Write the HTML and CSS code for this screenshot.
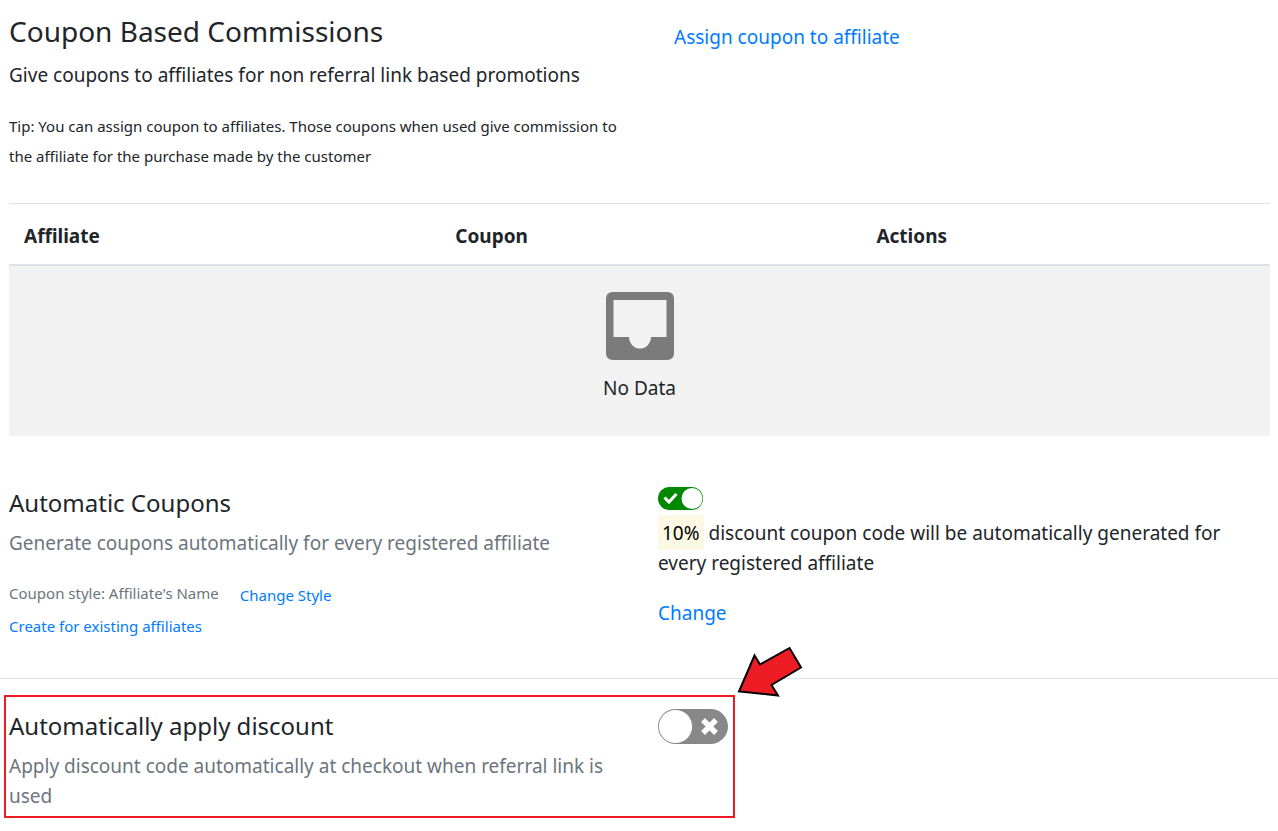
FILE: index.html
```html
<!DOCTYPE html>
<html lang="en">
<head>
<meta charset="utf-8">
<meta name="viewport" content="width=device-width, initial-scale=1">
<title>Coupon Based Commissions</title>
<link rel="stylesheet" href="styles.css">
</head>
<body>
<main>
  <header class="row intro">
    <div>
      <h1 class="title">Coupon Based Commissions</h1>
      <p class="text">Give coupons to affiliates for non referral link based promotions</p>
      <p class="tip">Tip: You can assign coupon to affiliates. Those coupons when used give commission to the affiliate for the purchase made by the customer</p>
    </div>
    <div class="assign"><a class="link" href="#assign">Assign coupon to affiliate</a></div>
  </header>

  <div class="table-wrap">
    <table class="coupons">
      <thead>
        <tr><th class="col-affiliate" scope="col">Affiliate</th><th class="col-coupon" scope="col">Coupon</th><th scope="col">Actions</th></tr>
      </thead>
      <tbody>
        <tr>
          <td class="empty" colspan="3">
            <svg class="inbox" viewBox="0 0 68 68" aria-hidden="true">
              <path fill="#7b7b7b" fill-rule="evenodd" d="M7 0H61Q68 0 68 7V61Q68 68 61 68H7Q0 68 0 61V7Q0 0 7 0ZM7.500 8V45H23A11 11.500 0 0 0 45 45H60.500V8Z"/>
            </svg>
            <div>No Data</div>
          </td>
        </tr>
      </tbody>
    </table>
  </div>

  <section class="row automatic">
    <div>
      <h2 class="subtitle" id="automatic-title">Automatic Coupons</h2>
      <p class="text muted">Generate coupons automatically for every registered affiliate</p>
      <div class="style-line">
        <span class="muted">Coupon style: Affiliate's Name</span>
        <a class="link style-link" href="#style">Change Style</a>
      </div>
      <a class="link existing" href="#existing">Create for existing affiliates</a>
    </div>
    <div class="generated">
      <label class="toggle toggle-small">
        <input class="toggle-input" type="checkbox" aria-labelledby="automatic-title" checked>
        <svg class="toggle-art" viewBox="0 0 45 23" aria-hidden="true">
          <rect width="45" height="23" rx="11.5" fill="#080"/>
          <circle cx="34" cy="11.5" r="10.5" fill="#fff"/>
          <path d="M6.5 10.5L11 15L18.5 7" fill="none" stroke="#fff" stroke-width="3"/>
        </svg>
      </label>
      <p class="text"><mark class="percent">10%</mark> discount coupon code will be automatically generated for every registered affiliate</p>
      <a class="link change" href="#change">Change</a>
    </div>
  </section>

  <section class="row apply">
    <div>
      <h2 class="subtitle" id="apply-title">Automatically apply discount</h2>
      <p class="text muted">Apply discount code automatically at checkout when referral link is used</p>
    </div>
    <div>
      <label class="toggle">
        <input class="toggle-input" type="checkbox" aria-labelledby="apply-title">
        <svg class="toggle-art" viewBox="0 0 70 35" aria-hidden="true">
          <rect width="70" height="35" rx="17.5" fill="#888"/>
          <circle cx="17.5" cy="17.5" r="16.6" fill="#fff"/>
          <path d="M45 11L58 24M58 11L45 24" fill="none" stroke="#fff" stroke-width="5.4"/>
        </svg>
        <svg class="arrow" viewBox="0 0 66 52" aria-hidden="true">
          <path d="M2 45.500L17.500 9.500L23 18.500L52.500 2L64 21.500L34.500 39L41 49.500Z" fill="#ed1c24" stroke="#000" stroke-width="2"/>
        </svg>
      </label>
    </div>
    <div class="highlight" aria-hidden="true"></div>
  </section>
</main>
</body>
</html>
```
FILE: styles.css
```css
* {
  box-sizing: border-box;
}

body {
  margin: 0;
  background: #fff;
  color: #212529;
  font-family: "Segoe UI", "Noto Sans", "Open Sans", sans-serif;
  font-size: 19px;
  line-height: 30px;
}

h1, h2, p {
  margin: 0;
  font-weight: 400;
}

.row {
  display: grid;
  grid-template-columns: 1fr 1fr;
  column-gap: 37px;
  padding: 0 8px 0 9px;
}

.intro {
  padding-top: 14px;
}

.title {
  margin-bottom: 12px;
  font-size: 28px;
  line-height: 34px;
}

.tip {
  margin-top: 21px;
  font-size: 15px;
}

.assign {
  padding: 8px 16px;
}

.link {
  color: #007bff;
  text-decoration: none;
}

.muted {
  color: #6c757d;
}

.table-wrap {
  padding: 32px 8px 0 9px;
}

.coupons {
  width: 100%;
  table-layout: fixed;
  border-spacing: 0;
}

.coupons th {
  height: 63px;
  padding: 4px 15px 0;
  border-top: 1px solid #dee2e6;
  border-bottom: 2px solid #dee2e6;
  text-align: left;
  font-weight: 700;
}

.coupons .col-affiliate {
  width: 34.2%;
}

.coupons .col-coupon {
  width: 33.4%;
}

.coupons .empty {
  padding: 26px 15px 33px;
  background: #f2f2f2;
  text-align: center;
}

.inbox {
  display: block;
  width: 68px;
  height: 68px;
  margin: 0 auto 13px;
}

.automatic {
  padding-top: 50px;
  padding-bottom: 37px;
  border-bottom: 1px solid #dee2e6;
}

.generated {
  padding-top: 1px;
}

.subtitle {
  margin-bottom: 8px;
  font-size: 24px;
  line-height: 34px;
}

.style-line {
  display: flex;
  align-items: flex-start;
  gap: 21px;
  margin-top: 20px;
  font-size: 15px;
}

.style-link {
  padding-top: 2px;
}

.existing {
  display: inline-block;
  font-size: 15px;
}

.percent {
  padding: 5px 4px 4px;
  background: #fcf8e3;
  color: #000;
}

.toggle {
  display: block;
  position: relative;
  width: 70px;
  height: 35px;
}

.toggle-small {
  width: 45px;
  height: 23px;
  margin-bottom: 8px;
}

.toggle-input {
  position: absolute;
  inset: 0;
  width: 100%;
  height: 100%;
  margin: 0;
  opacity: 0;
}

.toggle-art {
  display: block;
  width: 100%;
  height: 100%;
}

.change {
  display: inline-block;
  margin-top: 20px;
}

.apply {
  position: relative;
  padding-top: 30px;
  padding-bottom: 20px;
}

.highlight {
  position: absolute;
  top: 16px;
  bottom: 13px;
  left: 4px;
  width: calc(50% + 92px);
  border: 2px solid #ed1c24;
  pointer-events: none;
}

.arrow {
  position: absolute;
  top: -63px;
  left: 79px;
  width: 66px;
  height: 52px;
  pointer-events: none;
}
```
